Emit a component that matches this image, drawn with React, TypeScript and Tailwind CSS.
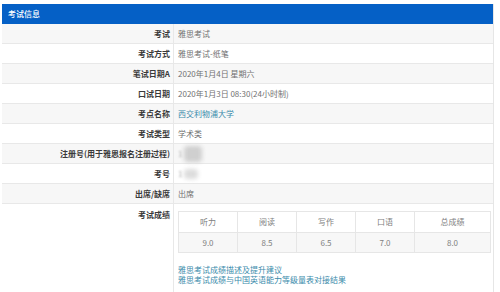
import React from 'react';

const rows: { label: string; value: React.ReactNode }[] = [
  { label: '考试', value: '雅思考试' },
  { label: '考试方式', value: '雅思考试-纸笔' },
  { label: '笔试日期A', value: '2020年1月4日 星期六' },
  { label: '口试日期', value: '2020年1月3日 08:30(24小时制)' },
  { label: '考点名称', value: <span className="text-[#3a8bab]">西交利物浦大学</span> },
  { label: '考试类型', value: '学术类' },
  { label: '注册号(用于雅思报名注册过程)', value: <Blurred tall /> },
  { label: '考号', value: <Blurred /> },
  { label: '出席/缺席', value: '出席' },
];

const scores = [
  { name: '听力', score: '9.0' },
  { name: '阅读', score: '8.5' },
  { name: '写作', score: '6.5' },
  { name: '口语', score: '7.0' },
  { name: '总成绩', score: '8.0' },
];

function Blurred({ tall }: { tall?: boolean }) {
  return (
    <span className="relative inline-flex items-center">
      <span className="text-[#aaa] blur-[1px]">1</span>
      <span
        className={
          tall
            ? 'ml-[2px] inline-block h-[16px] w-[18px] rounded-sm bg-[#cfcfcf] blur-[2px]'
            : 'ml-[2px] inline-block h-[10px] w-[14px] rounded-sm bg-[#dcdcdc] blur-[2px]'
        }
      />
    </span>
  );
}

function Row({ label, value, shaded }: { label: string; value: React.ReactNode; shaded: boolean }) {
  return (
    <div className={`flex h-5 border-b border-[#e8e8e8] ${shaded ? 'bg-[#f7f7f7]' : 'bg-white'}`}>
      <div className="flex w-[171px] items-center justify-end pr-[3px] font-semibold text-[#3a3a3a]">{label}</div>
      <div className="flex flex-1 items-center border-l border-[#e8e8e8] pl-[4px] text-[#707070]">{value}</div>
    </div>
  );
}

export default function App() {
  return (
    <div
      className="h-[292px] w-[500px] overflow-hidden bg-white pt-[4px] text-[8px] leading-[10px]"
      style={{ fontFamily: '"Noto Sans CJK SC", "Noto Sans", sans-serif' }}
    >
      <div className="ml-[2px] w-[492px] border-r border-[#e6e6e6]">
        <div className="flex h-5 items-center bg-[#0560c6] pl-[6px] font-medium text-white">考试信息</div>
        {rows.map((r, i) => (
          <Row key={r.label} label={r.label} value={r.value} shaded={i % 2 === 0} />
        ))}
        <div className="flex h-[100px] bg-white">
          <div className="w-[171px] pt-[6px] pr-[3px] text-right font-semibold text-[#3a3a3a]">考试成绩</div>
          <div className="flex-1 border-l border-[#e8e8e8] pt-[7px] pl-[4px]">
            <div className="flex w-[313px] flex-col border border-[#e6e6e6] text-[#808080]">
              <div className="flex h-5 bg-white">
                {scores.map((s, i) => (
                  <div
                    key={s.name}
                    className={`flex items-center justify-center ${i < 4 ? 'w-[59px] border-r border-[#e6e6e6]' : 'flex-1'}`}
                  >
                    {s.name}
                  </div>
                ))}
              </div>
              <div className="flex h-5 border-t border-[#e6e6e6] bg-[#f7f7f7]">
                {scores.map((s, i) => (
                  <div
                    key={s.name}
                    className={`flex items-center justify-center ${i < 4 ? 'w-[59px] border-r border-[#e6e6e6]' : 'flex-1'}`}
                  >
                    {s.score}
                  </div>
                ))}
              </div>
            </div>
            <div className="mt-[12px] flex flex-col text-[#3a8bab]">
              <span>雅思考试成绩描述及提升建议</span>
              <span>雅思考试成绩与中国英语能力等级量表对接结果</span>
            </div>
          </div>
        </div>
      </div>
    </div>
  );
}
